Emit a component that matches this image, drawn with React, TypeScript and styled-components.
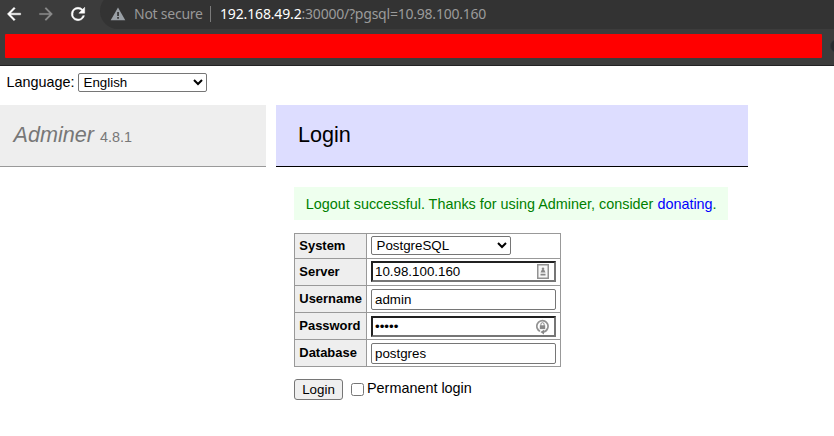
import React from "react";
import styled, { createGlobalStyle, css } from "styled-components";

const GlobalStyle = createGlobalStyle`
  * { box-sizing: border-box; }
  body {
    margin: 0;
    background: #fff;
    color: #000;
    font: 14.4px/18px "Liberation Sans", Arial, sans-serif;
    overflow: hidden;
  }
`;

const Screen = styled.div`
  width: 834px;
  height: 436px;
  overflow: hidden;
`;

const BrowserChrome = styled.header`
  height: 66px;
  background: #3c3c3c;
  border-bottom: 1px solid #222224;
  overflow: hidden;
`;

const Toolbar = styled.div`
  display: flex;
  height: 29px;
`;

const NavButtons = styled.div`
  display: flex;
  align-items: center;
  gap: 12px;
  width: 100px;
  padding: 0 0 1px 4px;

  svg { display: block; flex: none; }
`;

const AddressBar = styled.div`
  display: flex;
  flex: 1;
  height: 36px;
  margin-top: -7px;
  padding: 5px 0 0 10px;
  align-items: center;
  background: #333333;
  border-radius: 18px 0 0 18px;
  color: #9aa0a6;
  font: 14px/20px "Noto Sans", sans-serif;
  white-space: nowrap;
`;

const SecurityLabel = styled.span`
  width: 76px;
  margin-left: 8px;
  color: #989898;
  letter-spacing: -0.25px;
`;

const Separator = styled.span`
  width: 1px;
  height: 16px;
  margin-right: 9px;
  background: #7b7b7b;
`;

const Url = styled.span`
  color: #9b9b9b;
  letter-spacing: -0.22px;
`;

const Host = styled.span`
  color: #fff;
  letter-spacing: -0.15px;
`;

const BookmarkRow = styled.div`
  display: flex;
  align-items: center;
  gap: 8px;
  height: 36px;
  padding: 0 0 2px 5px;
`;

const RedactedBar = styled.div`
  flex: none;
  width: 817px;
  height: 24px;
  margin-bottom: 1px;
  border-radius: 1px;
  background: #ff0000;
`;

const BookmarkDot = styled.div`
  flex: none;
  width: 14px;
  height: 14px;
  border-radius: 50%;
  border: 1px solid #30363b;
  background: #262a2e;
`;

const LanguageRow = styled.div`
  display: flex;
  align-items: center;
  height: 39px;
  padding: 0 0 6px 6.5px;
`;

const SelectBox = styled.select<{ $width: number }>`
  width: ${(p) => p.$width}px;
  height: 19px;
  margin: 0;
  padding: 0 0 0 0.5px;
  border: 1px solid #767676;
  border-radius: 2px;
  background: #fff;
  color: #000;
  font: 13.333px "Liberation Sans", Arial, sans-serif;
`;

const LanguageLabel = styled.label`
  width: 71.5px;
  padding-bottom: 2px;
`;

const Columns = styled.div`
  display: grid;
  grid-template-columns: 266px 472px;
  column-gap: 10px;
`;

const headingBase = css`
  height: 62px;
  margin: 0;
  font-size: 21.6px;
  font-weight: normal;
  line-height: 27px;
`;

const Brand = styled.h1`
  ${headingBase}
  padding: 16px 0 0 13.5px;
  background: #eee;
  border-bottom: 1px solid #999;
  color: #777;
`;

const BrandName = styled.span`
  font-style: italic;
`;

const Version = styled.span`
  font-size: 14.4px;
`;

const Title = styled.h2`
  ${headingBase}
  padding: 16px 0 0 22px;
  background: #ddf;
  border-bottom: 1px solid #000;
`;

const Content = styled.main`
  padding: 20px 0 0 18px;
`;

const Message = styled.p`
  width: 434px;
  height: 33px;
  margin: 0 0 13px;
  padding: 8px 11.7px;
  background: #efe;
  color: green;
  white-space: nowrap;
`;

const Link = styled.a`
  color: blue;
  text-decoration: none;
`;

const Fields = styled.div`
  width: 267px;
  border: solid #999;
  border-width: 1px 0 0 1px;
`;

const FieldRow = styled.div<{ $height: number }>`
  display: grid;
  grid-template-columns: 72px 194px;
  height: ${(p) => p.$height}px;
`;

const FieldName = styled.label`
  display: flex;
  align-items: center;
  padding-left: 4.3px;
  border: solid #999;
  border-width: 0 1px 1px 0;
  background: #eee;
  font-size: 12.96px;
  font-weight: bold;
  line-height: 18px;
`;

const FieldValue = styled.div<{ $top: number }>`
  display: flex;
  align-items: flex-start;
  padding: ${(p) => p.$top}px 0 0 4px;
  border: solid #999;
  border-width: 0 1px 1px 0;
`;

const InputFrame = styled.div<{ $inset?: boolean }>`
  display: flex;
  align-items: center;
  width: 185px;
  height: 21px;
  padding-right: 5px;
  background: #fff;
  border: 1px solid #767676;
  border-radius: 2px;
  padding-left: 3px;
  ${(p) =>
    p.$inset &&
    css`
      border: 2px solid;
      border-color: #212121 #767676 #767676 #212121;
      border-radius: 0;
      padding-left: 2px;
    `}

  svg { display: block; flex: none; }
`;

const TextInput = styled.input`
  flex: 1;
  min-width: 0;
  height: 17px;
  margin: 0;
  padding: 0;
  border: 0;
  outline: 0;
  background: transparent;
  color: #000;
  font: 13.333px "Liberation Sans", Arial, sans-serif;
`;

const Actions = styled.div`
  display: flex;
  align-items: flex-start;
  margin-top: 12px;
`;

const SubmitButton = styled.button`
  width: 49px;
  height: 21px;
  padding: 0;
  border: 1px solid #767676;
  border-radius: 3px;
  background: #efefef;
  color: #000;
  font: 13.333px "Liberation Sans", Arial, sans-serif;
`;

const Checkbox = styled.input`
  width: 13px;
  height: 13px;
  margin: 4px 3px 0 8px;
`;

const BackIcon = () => (
  <svg width="20" height="20" viewBox="0 0 24 24" fill="#fff">
    <path d="M20 11H7.83l5.59-5.59L12 4l-8 8 8 8 1.41-1.41L7.83 13H20v-2z" stroke="#fff" strokeWidth=".5" />
  </svg>
);

const ForwardIcon = () => (
  <svg width="20" height="20" viewBox="0 0 24 24" fill="#8b8b8b">
    <path d="M12 4l-1.41 1.41L16.17 11H4v2h12.17l-5.58 5.59L12 20l8-8z" stroke="#8b8b8b" strokeWidth=".2" />
  </svg>
);

const ReloadIcon = () => (
  <svg width="20" height="20" viewBox="0 0 24 24" fill="#fff">
    <path d="M17.65 6.35A7.96 7.96 0 0 0 12 4a8 8 0 1 0 7.73 10h-2.08A6 6 0 1 1 12 6c1.66 0 3.14.69 4.22 1.78L13 11h7V4z" stroke="#fff" strokeWidth=".6" />
  </svg>
);

const WarningIcon = () => (
  <svg width="16" height="16" viewBox="0 0 16 16">
    <path d="M8 1.5 15.3 14.2H.7Z" fill="#9aa0a6" />
    <path d="M7.2 6h1.7v4H7.2zm0 5h1.7v1.7H7.2z" fill="#333" />
  </svg>
);

const CredentialIcon = () => (
  <svg width="12" height="15" viewBox="0 0 12 15">
    <rect x=".75" y=".75" width="10.5" height="13.5" fill="#f7f7f7" stroke="#929292" strokeWidth="1.5" />
    <circle cx="6" cy="4.6" r="1.2" fill="#888" />
    <path d="M5 5.2h2L8.5 8.5h-5zM3.5 9.7h5v1.7h-5z" fill="#888" />
  </svg>
);

const PasswordIcon = () => (
  <svg width="13" height="16" viewBox="0 0 13 16">
    <path d="M4 12.3A5.6 5.6 0 1 1 11.6 9.4c-.7 1.7-2.2 3.4-4.5 3.8" fill="none" stroke="#929292" strokeWidth="1.7" />
    <path d="M8 10.7v4.8L4.4 13z" fill="#888" />
    <path d="M4.9 6.8V5.3a1.6 1.6 0 0 1 3.2 0v1.5" fill="none" stroke="#888" />
    <rect x="3.8" y="6.3" width="5.4" height="3.8" fill="#888" />
  </svg>
);

type Field = {
  name: string;
  value: string;
  type?: string;
  icon?: React.ReactNode;
  top: number;
};

const fields: Field[] = [
  { name: "Server", value: "10.98.100.160", icon: <CredentialIcon />, top: 2 },
  { name: "Username", value: "admin", top: 3 },
  { name: "Password", value: "admin", type: "password", icon: <PasswordIcon />, top: 3 },
  { name: "Database", value: "postgres", top: 3 },
];

export default function App() {
  return (
    <Screen>
      <GlobalStyle />
      <BrowserChrome>
        <Toolbar>
          <NavButtons>
            <BackIcon />
            <ForwardIcon />
            <ReloadIcon />
          </NavButtons>
          <AddressBar>
            <WarningIcon />
            <SecurityLabel>Not secure</SecurityLabel>
            <Separator />
            <Url>
              <Host>192.168.49.2</Host>:30000/?pgsql=10.98.100.160
            </Url>
          </AddressBar>
        </Toolbar>
        <BookmarkRow>
          <RedactedBar />
          <BookmarkDot />
        </BookmarkRow>
      </BrowserChrome>
      <LanguageRow>
        <LanguageLabel htmlFor="language">Language:</LanguageLabel>
        <SelectBox id="language" $width={129} defaultValue="English">
          <option>English</option>
        </SelectBox>
      </LanguageRow>
      <Columns>
        <Brand>
          <BrandName>Adminer</BrandName> <Version>4.8.1</Version>
        </Brand>
        <div>
          <Title>Login</Title>
          <Content>
            <Message>
              Logout successful. Thanks for using Adminer, consider <Link href="#">donating</Link>.
            </Message>
            <Fields>
              <FieldRow $height={25}>
                <FieldName>System</FieldName>
                <FieldValue $top={2}>
                  <SelectBox $width={140} defaultValue="PostgreSQL">
                    <option>PostgreSQL</option>
                  </SelectBox>
                </FieldValue>
              </FieldRow>
              {fields.map((f) => (
                <FieldRow key={f.name} $height={27}>
                  <FieldName>{f.name}</FieldName>
                  <FieldValue $top={f.top}>
                    <InputFrame $inset={!!f.icon}>
                      <TextInput type={f.type ?? "text"} defaultValue={f.value} />
                      {f.icon}
                    </InputFrame>
                  </FieldValue>
                </FieldRow>
              ))}
            </Fields>
            <Actions>
              <SubmitButton>Login</SubmitButton>
              <Checkbox id="permanent" type="checkbox" />
              <label htmlFor="permanent">Permanent login</label>
            </Actions>
          </Content>
        </div>
      </Columns>
    </Screen>
  );
}
